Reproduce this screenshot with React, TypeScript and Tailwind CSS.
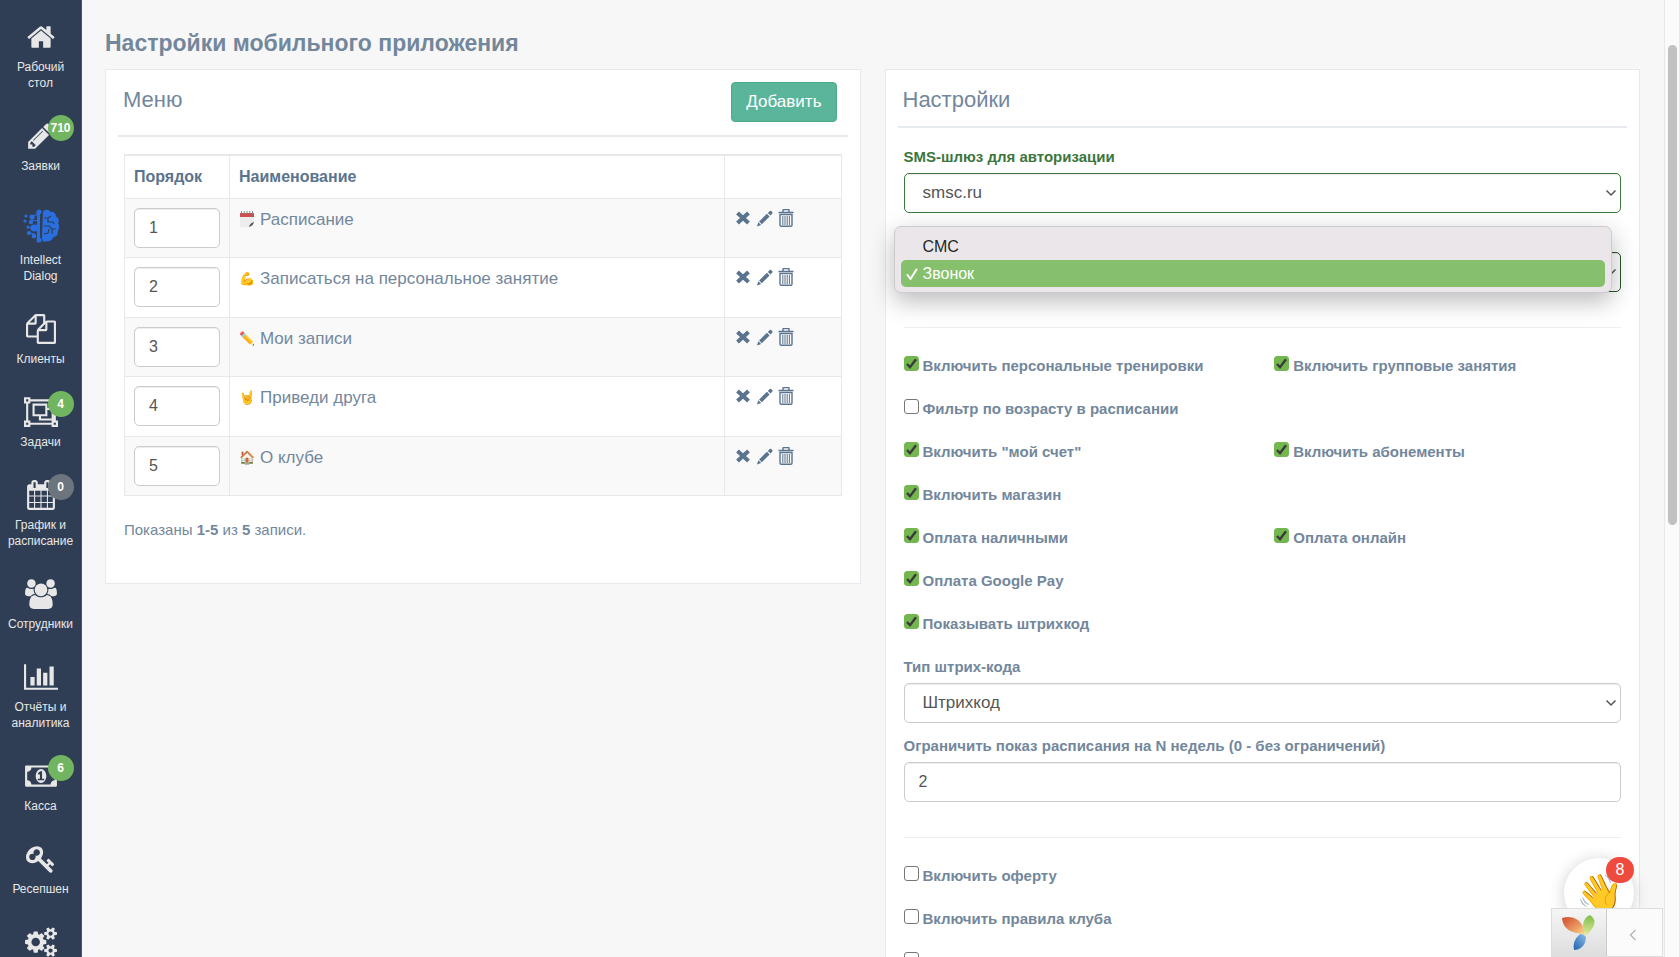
import { useState } from 'react'
import type { ReactNode } from 'react'
import clsx from 'clsx'

const iconPaths = {
  home: 'M1472 992v480q0 26-19 45t-45 19h-384v-384h-256v384h-384q-26 0-45-19t-19-45v-480q0-1 .5-3t.5-3l575-474 575 474q1 2 1 6zm223-69l-62 74q-8 9-21 11h-3q-13 0-21-7l-692-577-692 577q-12 8-24 7-13-2-21-11l-62-74q-8-10-7-23.5t11-21.5l719-599q32-26 76-26t76 26l244 204v-195q0-14 9-23t23-9h192q14 0 23 9t9 23v408l219 182q10 8 11 21.5t-7 23.5z',
  pencil: 'M491 1536l91-91-235-235-91 91v107h128v128h107zm523-928q0-22-22-22-10 0-17 7l-542 542q-7 7-7 17 0 22 22 22 10 0 17-7l542-542q7-7 7-17zm-54-192l416 416-832 832h-416v-416zm683 96q0 53-37 90l-166 166-416-416 166-165q36-38 90-38 53 0 91 38l235 234q37 39 37 91z',
  files: 'M1696 384q40 0 68 28t28 68v1216q0 40-28 68t-68 28h-960q-40 0-68-28t-28-68v-288h-544q-40 0-68-28t-28-68v-672q0-40 20-88t48-76l408-408q28-28 76-48t88-20h416q40 0 68 28t28 68v328q68-40 128-40h416zm-544 213l-299 299h299v-299zm-640-384l-299 299h299v-299zm196 647l316-316v-416h-384v416q0 40-28 68t-68 28h-416v640h512v-256q0-40 20-88t48-76zm956 804v-1152h-384v416q0 40-28 68t-68 28h-416v640h896z',
  group: 'M2048 384h-128v1024h128v384h-384v-128h-1280v128h-384v-384h128v-1024h-128v-384h384v128h1280v-128h384v384zm-256-256v128h128v-128h-128zm-1664 0v128h128v-128h-128zm128 1536v-128h-128v128h128zm1408-128v-128h128v-1024h-128v-128h-1280v128h-128v1024h128v128h1280zm256 128v-128h-128v128h128zm-512-1024h384v768h-896v-256h-384v-768h896v256zm-768 384h640v-512h-640v512zm1024 256v-512h-256v384h-384v128h640z',
  calendar: 'M192 1664h288v-288h-288v288zm352 0h320v-288h-320v288zm-352-352h288v-320h-288v320zm352 0h320v-320h-320v320zm-352-384h288v-288h-288v288zm736 736h320v-288h-320v288zm-384-736h320v-288h-320v288zm768 736h288v-288h-288v288zm-384-352h320v-320h-320v320zm-352-864v-288q0-13-9.5-22.5t-22.5-9.5h-64q-13 0-22.5 9.5t-9.5 22.5v288q0 13 9.5 22.5t22.5 9.5h64q13 0 22.5-9.5t9.5-22.5zm736 864h288v-320h-288v320zm-384-384h320v-288h-320v288zm384 0h288v-288h-288v288zm32-480v-288q0-13-9.5-22.5t-22.5-9.5h-64q-13 0-22.5 9.5t-9.5 22.5v288q0 13 9.5 22.5t22.5 9.5h64q13 0 22.5-9.5t9.5-22.5zm384-64v1280q0 52-38 90t-90 38h-1408q-52 0-90-38t-38-90v-1280q0-52 38-90t90-38h128v-96q0-66 47-113t113-47h64q66 0 113 47t47 113v96h384v-96q0-66 47-113t113-47h64q66 0 113 47t47 113v96h128q52 0 90 38t38 90z',
  users: 'M657 896q-162 5-265 128h-134q-82 0-138-40.5t-56-118.5q0-353 124-353 6 0 43.5 21t97.5 42.5 119 21.5q67 0 133-23-5 37-5 66 0 139 81 256zm1071 637q0 120-73 189.5t-194 69.5h-874q-121 0-194-69.5t-73-189.5q0-53 3.5-103.5t14-109 26.5-108.5 43-97.5 62-81 85.5-53.5 111.5-20q10 0 43 21.5t73 48 107 48 135 21.5 135-21.5 107-48 73-48 43-21.5q61 0 111.5 20t85.5 53.5 62 81 43 97.5 26.5 108.5 14 109 3.5 103.5zm-1024-1277q0 106-75 181t-181 75-181-75-75-181 75-181 181-75 181 75 75 181zm704 384q0 159-112.5 271.5t-271.5 112.5-271.5-112.5-112.5-271.5 112.5-271.5 271.5-112.5 271.5 112.5 112.5 271.5zm576 225q0 78-56 118.5t-138 40.5h-134q-103-123-265-128 81-117 81-256 0-29-5-66 66 23 133 23 59 0 119-21.5t97.5-42.5 43.5-21q124 0 124 353zm-128-609q0 106-75 181t-181 75-181-75-75-181 75-181 181-75 181 75 75 181z',
  chart: 'M640 896v512h-256v-512h256zm384-512v1024h-256v-1024h256zm1024 1152v128h-2048v-1536h128v1408h1920zm-640-896v768h-256v-768h256zm384-384v1152h-256v-1152h256z',
  money: 'M768 1152h384v-96h-128v-448h-114l-148 137 77 80q42-37 55-57h2v288h-128v96zm512-256q0 70-21 142t-59.5 134-101.5 101-138 39-138-39-101.5-101-59.5-134-21-142 21-142 59.5-134 101.5-101 138-39 138 39 101.5 101 59.5 134 21 142zm512 256v-512q-106 0-181-75t-75-181h-1152q0 106-75 181t-181 75v512q106 0 181 75t75 181h1152q0-106 75-181t181-75zm128-832v1152q0 26-19 45t-45 19h-1792q-26 0-45-19t-19-45v-1152q0-26 19-45t45-19h1792q26 0 45 19t19 45z',
  key: 'M832 512q0-80-56-136t-136-56-136 56-56 136q0 42 19 83-41-19-83-19-80 0-136 56t-56 136 56 136 136 56 136-56 56-136q0-42-19-83 41 19 83 19 80 0 136-56t56-136zm851 704q0 17-49 66t-66 49q-9 0-28.5-16t-36.5-33-38.5-40-24.5-26l-96 96 220 220q28 28 28 68 0 42-39 81t-81 39q-40 0-68-28l-671-671q-176 131-365 131-163 0-265.5-102.5t-102.5-265.5q0-160 95-313t248-248 313-95q163 0 265.5 102.5t102.5 265.5q0 189-131 365l355 355 96-96q-3-3-26-24.5t-40-38.5-33-36.5-16-28.5q0-17 49-66t66-49q13 0 23 10 6 6 46 44.5t82 79.5 86.5 86 73 78 28.500 41z',
  gears: 'M896 896q0-106-75-181t-181-75-181 75-75 181 75 181 181 75 181-75 75-181zm768 512q0-52-38-90t-90-38-90 38-38 90q0 53 37.5 90.5t90.5 37.5 90.5-37.5 37.5-90.5zm0-1024q0-52-38-90t-90-38-90 38-38 90q0 53 37.5 90.5t90.5 37.5 90.5-37.5 37.5-90.5zm-384 421v185q0 10-7 19.5t-16 10.5l-155 24q-11 35-32 76 34 48 90 115 7 11 7 20 0 12-7 19-23 30-82.5 89.5t-78.5 59.5q-11 0-21-7l-115-90q-37 19-77 31-11 108-23 155-7 24-30 24h-186q-11 0-20-7.5t-10-17.5l-23-153q-34-10-75-31l-118 89q-7 7-20 7-11 0-21-8-144-133-144-160 0-9 7-19 10-14 41-53t47-61q-23-44-35-82l-152-24q-10-1-17-9.5t-7-19.5v-185q0-10 7-19.5t16-10.5l155-24q11-35 32-76-34-48-90-115-7-11-7-20 0-12 7-20 22-30 82-89t79-59q11 0 21 7l115 90q34-18 77-32 11-108 23-154 7-24 30-24h186q11 0 20 7.5t10 17.5l23 153q34 10 75 31l118-89q8-7 20-7 11 0 21 8 144 133 144 160 0 8-7 19-12 16-42 54t-45 60q23 48 34 82l152 23q10 2 17 10.5t7 19.5zm640 533v140q0 16-149 31-12 27-30 52 51 113 51 138 0 4-4 7-122 71-124 71-8 0-46-47t-52-68q-20 2-30 2t-30-2q-14 21-52 68t-46 47q-2 0-124-71-4-3-4-7 0-25 51-138-18-25-30-52-149-15-149-31v-140q0-16 149-31 13-29 30-52-51-113-51-138 0-4 4-7 4-2 35-20t59-34 30-16q8 0 46 46.5t52 67.5q20-2 30-2t30 2q51-71 92-112l6-2q4 0 124 70 4 3 4 7 0 25-51 138 17 23 30 52 149 15 149 31zm0-1024v140q0 16-149 31-12 27-30 52 51 113 51 138 0 4-4 7-122 71-124 71-8 0-46-47t-52-68q-20 2-30 2t-30-2q-14 21-52 68t-46 47q-2 0-124-71-4-3-4-7 0-25 51-138-18-25-30-52-149-15-149-31v-140q0-16 149-31 13-29 30-52-51-113-51-138 0-4 4-7 4-2 35-20t59-34 30-16q8 0 46 46.5t52 67.5q20-2 30-2t30 2q51-71 92-112l6-2q4 0 124 70 4 3 4 7 0 25-51 138 17 23 30 52 149 15 149 31z',
}

type IconName = keyof typeof iconPaths

interface NavItem {
  label: string
  icon: IconName | 'brain'
  wide?: boolean
  badge?: number
}

const navItems: NavItem[] = [
  { label: 'Рабочий стол', icon: 'home' },
  { label: 'Заявки', icon: 'pencil', badge: 710 },
  { label: 'Intellect Dialog', icon: 'brain' },
  { label: 'Клиенты', icon: 'files' },
  { label: 'Задачи', icon: 'group', wide: true, badge: 4 },
  { label: 'График и расписание', icon: 'calendar', badge: 0 },
  { label: 'Сотрудники', icon: 'users', wide: true },
  { label: 'Отчёты и аналитика', icon: 'chart', wide: true },
  { label: 'Касса', icon: 'money', wide: true, badge: 6 },
  { label: 'Ресепшен', icon: 'key' },
  { label: 'Настройки', icon: 'gears', wide: true },
]

const menuRows = [
  { order: 1, emoji: 'calendar', name: 'Расписание' },
  { order: 2, emoji: '💪', name: 'Записаться на персональное занятие' },
  { order: 3, emoji: '✏️', name: 'Мои записи' },
  { order: 4, emoji: '🤘', name: 'Приведи друга' },
  { order: 5, emoji: '🏠', name: 'О клубе' },
]

// one entry per line, second column is optional
const optionRows = [
  ['Включить персональные тренировки', 'Включить групповые занятия'],
  ['Фильтр по возрасту в расписании'],
  ['Включить "мой счет"', 'Включить абонементы'],
  ['Включить магазин'],
  ['Оплата наличными', 'Оплата онлайн'],
  ['Оплата Google Pay'],
  ['Показывать штрихкод'],
]

const legalRows = [['Включить оферту'], ['Включить правила клуба'], ['Включить отзывы']]

const uncheckedByDefault = [
  'Фильтр по возрасту в расписании',
  'Включить оферту',
  'Включить правила клуба',
  'Включить отзывы',
]

function BrainIcon() {
  return (
    <svg viewBox="0 0 36 34" className="h-[34px] w-9" fill="#2a6fe0" stroke="#2a6fe0">
      <g strokeWidth="1.2">
        <path d="M9 8 16 4v26M16 12l-8-1M12 19H6M12 19l4 6M12 19l4-6M11 25l-4-1" fill="none" />
        <path d="M14 3v28l3 1V2z" stroke="none" />
        <circle cx="16" cy="3" r="2" />
        <circle cx="16" cy="31" r="2" />
        <circle cx="9" cy="8" r="2" />
        <circle cx="3" cy="7" r="1" />
        <circle cx="2" cy="12" r="1" />
        <circle cx="8" cy="13" r="1.6" />
        <circle cx="11" cy="19" r="3" />
        <circle cx="5" cy="18" r="1" />
        <circle cx="6" cy="24" r="1.4" />
        <circle cx="11" cy="27" r="1.8" />
      </g>
      <path
        d="M21 3q4-3 6 1 5-1 5 4 4 2 2 6 2 4 0 8 0 5-4 5-2 5-6 4-4 2-4-2z"
        strokeWidth="2"
        strokeLinejoin="round"
      />
      <path
        d="M21 9h4l3-2M25 9v4h5l1 2M21 17h5l3 3h4M26 20l-1 4-4 1M29 20v5"
        fill="none"
        stroke="#2f3e54"
        strokeWidth="1.2"
      />
    </svg>
  )
}

function NavIcon({ name, wide }: { name: NavItem['icon']; wide?: boolean }) {
  if (name === 'brain') return <BrainIcon />
  let viewBox = '0 0 1792 1792'
  if (wide) viewBox = name === 'money' || name === 'gears' ? '-64 0 2048 1792' : '0 0 2048 1792'
  return (
    <svg viewBox={viewBox} className={wide ? 'h-[30px] w-[34px]' : 'h-[30px] w-[30px]'} fill="#e7e7e7">
      <path d={iconPaths[name]} />
    </svg>
  )
}

function Sidebar() {
  return (
    <nav className="w-[82px] shrink-0 border-r border-[#49566a] bg-[#2f3e54] pt-[22px]">
      {navItems.map(item => (
        <a key={item.label} href="#" className="flex flex-col items-center px-1 pb-[30px] text-center text-xs leading-4 text-[#e7e7e7]">
          <span className={clsx('relative flex items-center justify-center', item.icon === 'brain' ? 'h-12 pb-[5px]' : 'h-[37px] pb-[7px]')}>
            <NavIcon name={item.icon} wide={item.wide} />
            {item.badge !== undefined && (
              <span
                className={clsx(
                  'absolute -top-[6px] left-1/2 ml-[7px] flex h-[26px] w-[26px] items-center justify-center rounded-full text-xs font-bold text-white',
                  item.badge > 0 ? 'bg-[#72b560]' : 'bg-[#6c757d]'
                )}
              >
                {item.badge}
              </span>
            )}
          </span>
          {item.label}
        </a>
      ))}
    </nav>
  )
}

function SpiralCalendar() {
  return (
    <svg viewBox="0 0 16 17" className="h-[17px] w-4">
      <path d="M1 3h14v8l-5 5H1z" fill="#ececec" />
      <path d="M1 2h14v4H1z" fill="#c9504e" />
      <path d="M2.500 0v3M5.200 0v3M8 0v3M10.800 0v3M13.500 0v3" stroke="#8a8a8a" />
      <path d="M15 11q-1 4-5 5 1-4 5-5z" fill="#4f4f4f" />
    </svg>
  )
}

function RowActions() {
  return (
    <div className="flex gap-[5px] text-[#5a738e]">
      <button aria-label="Отключить">
        <svg viewBox="0 0 16 18" className="h-[18px] w-4" fill="none" stroke="currentColor" strokeWidth="4">
          <path d="m2.500 4 11 10M13.500 4l-11 10" />
        </svg>
      </button>
      <button aria-label="Изменить">
        <svg viewBox="0 0 18 18" className="h-[18px] w-[17px]" fill="currentColor">
          <path d="m1 18 1.500-4.500 3 3zM3.300 12.600 11.600 4.500l2.800 2.800-8.200 8.200zM12.500 3.600 14.600 1.500q.8-.6 1.500 0l1.200 1.300q.7.700 0 1.500L15.400 6.400z" />
        </svg>
      </button>
      <button aria-label="Удалить">
        <svg viewBox="0 0 16 18" className="h-[18px] w-4" fill="none" stroke="currentColor">
          <path d="M.5 3.500h15M5 3V1q0-.5.500-.5h5q.5 0 .5.500v2" strokeWidth="1.400" />
          <path d="M2 5.500h12V16q0 1.300-1.300 1.300H3.300Q2 17.300 2 16z" strokeWidth="1.400" />
          <path d="M4.800 7v9M7 7v9M9.200 7v9M11.400 7v9" />
        </svg>
      </button>
    </div>
  )
}

function Panel({ title, action, children }: { title: string; action?: ReactNode; children: ReactNode }) {
  return (
    <section className="border border-[#e6e9ed] bg-white px-3 pt-3">
      <div className={clsx('flex items-start justify-between border-b-2 border-[#e6e9ed] pl-[5px] pr-[11px]', action ? 'pb-[13px]' : 'pb-2')}>
        <h2 className="text-[22px] leading-9">{title}</h2>
        {action}
      </div>
      <div className={clsx('px-[6px]', action ? 'pt-[17px]' : 'pt-[18px]')}>{children}</div>
    </section>
  )
}

function MenuPanel() {
  return (
    <Panel
      title="Меню"
      action={
        <button className="h-10 rounded-[4px] border border-[#4ea88a] bg-[#5bb59a] px-[14px] text-[17px] text-white">Добавить</button>
      }
    >
      <table className="h-[342px] w-full border-collapse border border-t-2 border-[#e8e8e8] text-[17px]">
        <thead>
          <tr className="h-[43px] text-left text-base text-[#5a738e]">
            <th className="w-[105px] border border-[#e8e8e8] px-[9px]">Порядок</th>
            <th className="border border-[#e8e8e8] px-[9px]">Наименование</th>
            <th className="w-[117px] border border-[#e8e8e8]" />
          </tr>
        </thead>
        <tbody>
          {menuRows.map(row => (
            <tr key={row.order} className="align-top odd:bg-[#f9f9f9]">
              <td className="border border-[#e8e8e8] px-[9px] pt-[9px] pb-2">
                <input
                  aria-label={`Порядок: ${row.name}`}
                  defaultValue={row.order}
                  className="block h-10 w-full rounded-[5px] border border-[#ccc] bg-white px-[14px] text-base text-[#555] shadow-[inset_0_1px_1px_rgba(0,0,0,0.075)]"
                />
              </td>
              <td className="border border-[#e8e8e8] px-[9px] pt-[9px] leading-6">
                <div className="flex items-center">
                  <span className="w-[21px] text-[13px]">{row.emoji === 'calendar' ? <SpiralCalendar /> : row.emoji}</span>
                  {row.name}
                </div>
              </td>
              <td className="border border-[#e8e8e8] px-[10px] pt-[10px]">
                <RowActions />
              </td>
            </tr>
          ))}
        </tbody>
      </table>
      <p className="pt-6 pb-[43px] text-[15px] leading-5">
        Показаны <b>1-5</b> из <b>5</b> записи.
      </p>
    </Panel>
  )
}

function Field({ id, label, valid, children }: { id: string; label: string; valid?: boolean; children: ReactNode }) {
  return (
    <div className={clsx('relative mb-3', valid && 'text-[#3c763d]')}>
      <label htmlFor={id} className="mb-[5px] block text-[15px] leading-[22px] font-bold">
        {label}
      </label>
      {children}
    </div>
  )
}

function SelectBox({ id, value, border }: { id: string; value: string; border: string }) {
  return (
    <div className="relative">
      <select id={id} className={clsx('block h-10 w-full appearance-none rounded-[5px] border bg-white px-[18px] text-[17px] text-[#555] shadow-[inset_0_1px_1px_rgba(0,0,0,0.075)]', border)}>
        <option>{value}</option>
      </select>
      <svg viewBox="0 0 12 8" className="pointer-events-none absolute top-4 right-1 h-2 w-3" fill="none" stroke="#555" strokeWidth="1.5">
        <path d="m1.500 1.500 4.500 4.500 4.500-4.500" />
      </svg>
    </div>
  )
}

function AuthTypePopup() {
  return (
    <ul
      role="listbox"
      aria-label="Тип авторизации"
      className="absolute top-px right-[9px] -left-[10px] rounded-[7px] border border-[#cfcacd] bg-[#ebe6ea] px-[6px] pt-[6px] pb-[5px] text-base leading-[27px] shadow-[0_8px_24px_rgba(0,0,0,0.28)]"
    >
      <li role="option" aria-selected="false" className="pl-[22px] text-[#262626]">
        СМС
      </li>
      <li role="option" aria-selected="true" className="flex items-center rounded-[5px] bg-[#87c06c] pl-[5px] text-white">
        <svg viewBox="0 0 12 12" className="mr-[5px] h-3 w-3" fill="none" stroke="currentColor" strokeWidth="2" strokeLinecap="round" strokeLinejoin="round">
          <path d="m1.500 7 3 4 6-9.500" />
        </svg>
        Звонок
      </li>
    </ul>
  )
}

function CheckOption({ label }: { label: string }) {
  const [checked, setChecked] = useState(!uncheckedByDefault.includes(label))
  return (
    <label className="flex h-[43px] items-center text-[15px] font-bold">
      <span className="relative mr-1 mb-[6px] block h-[15px] w-[15px]">
        <input
          type="checkbox"
          checked={checked}
          onChange={e => setChecked(e.target.checked)}
          className="block h-[15px] w-[15px] appearance-none rounded-[3px] border border-[#767676] bg-white checked:border-[#74b751] checked:bg-[#74b751]"
        />
        {checked && (
          <svg viewBox="0 0 15 15" className="pointer-events-none absolute inset-0" fill="none" stroke="#3a3a3a" strokeWidth="2.400">
            <path d="m3 8 3 3.200 6-8" />
          </svg>
        )}
      </span>
      {label}
    </label>
  )
}

function OptionGrid({ rows }: { rows: string[][] }) {
  return (
    <div className="pt-[17px]">
      {rows.map(row => (
        <div key={row[0]} className="grid grid-cols-2 gap-x-6">
          {row.map(label => (
            <CheckOption key={label} label={label} />
          ))}
        </div>
      ))}
    </div>
  )
}

function SettingsPanel() {
  return (
    <Panel title="Настройки">
      <Field id="gateway" label="SMS-шлюз для авторизации" valid>
        <SelectBox id="gateway" value="smsc.ru" border="border-[#3c763d]" />
      </Field>
      <Field id="auth-type" label="Тип авторизации" valid>
        <SelectBox id="auth-type" value="Звонок" border="border-[#2b542c]" />
        <AuthTypePopup />
      </Field>
      <hr className="mt-[35px] border-[#eee]" />
      <OptionGrid rows={optionRows} />
      <div className="pt-[10px]">
        <Field id="barcode" label="Тип штрих-кода">
          <SelectBox id="barcode" value="Штрихкод" border="border-[#ccc]" />
        </Field>
        <Field id="weeks" label="Ограничить показ расписания на N недель (0 - без ограничений)">
          <input id="weeks" defaultValue="2" className="block h-10 w-full rounded-[5px] border border-[#ccc] px-[14px] text-base text-[#555] shadow-[inset_0_1px_1px_rgba(0,0,0,0.075)]" />
        </Field>
      </div>
      <hr className="mt-[35px] border-[#eee]" />
      <OptionGrid rows={legalRows} />
    </Panel>
  )
}

function ChatButton() {
  return (
    <button aria-label="Чат" className="absolute right-[46px] bottom-[29px] flex h-[70px] w-[70px] items-center justify-center rounded-full bg-white text-[38px] shadow-[0_2px_16px_rgba(0,0,0,0.2)]">
      👋
      <span className="absolute -top-px right-0 flex h-[26px] w-7 items-center justify-center rounded-full bg-[#ee4b3e] text-base text-white">8</span>
    </button>
  )
}

function DebugToolbar() {
  return (
    <div className="absolute right-[17px] bottom-0 flex h-[49px] w-28 border border-[#ddd] bg-[#fbfbfb]">
      <a href="#" aria-label="Yii" className="flex w-[55px] items-center justify-center border-r border-[#ccc] bg-gradient-to-b from-[#f5f5f5] to-[#dedede]">
        <svg viewBox="0 0 34 36" className="h-9 w-[34px]">
          <defs>
            <linearGradient id="orange" x1="0" y1="0" x2="1" y2="1">
              <stop offset="0" stopColor="#cf4a2c" />
              <stop offset=".6" stopColor="#eb9a63" />
              <stop offset="1" stopColor="#fbe08a" />
            </linearGradient>
            <linearGradient id="green" x1="0" y1="0" x2="0" y2="1">
              <stop offset="0" stopColor="#7dbd4b" />
              <stop offset="1" stopColor="#e3ec9a" />
            </linearGradient>
            <linearGradient id="blue" x1="1" y1="0" x2="0" y2="1">
              <stop offset="0" stopColor="#8fbfe8" />
              <stop offset="1" stopColor="#1f62ae" />
            </linearGradient>
          </defs>
          <path d="M0 3Q9 0 16 5q6 5 7 15-4-2-9-2Q1 15 0 3z" fill="url(#orange)" />
          <path d="M28 0q6 4 4 10-2 5-8 11-2-5-3-10 0-8 7-11z" fill="url(#green)" />
          <path d="M18 19q4 0 6 3 0 6-4 10-3 3-8 3-2-9 6-16z" fill="url(#blue)" />
        </svg>
      </a>
      <button aria-label="Развернуть" className="flex flex-1 items-center justify-center pt-1 pr-1">
        <svg viewBox="0 0 8 14" className="h-3 w-2" fill="none" stroke="#aaa" strokeWidth="1.300">
          <path d="M7 1 1 7l6 6" />
        </svg>
      </button>
    </div>
  )
}

export default function App() {
  return (
    <div className="relative flex h-screen overflow-hidden bg-[#f7f7f7] font-['Liberation_Sans',Arial,sans-serif] text-[#73879c]">
      <Sidebar />
      <main className="min-w-0 flex-1 pt-[26px] pr-6 pl-[23px]">
        <h1 className="mb-[9px] text-[23px] leading-[34px] font-bold">Настройки мобильного приложения</h1>
        <div className="grid grid-cols-2 items-start gap-6">
          <MenuPanel />
          <SettingsPanel />
        </div>
      </main>
      <div className="w-4 shrink-0 border-x border-[#e8e8e8] bg-[#fafafa] pt-[45px]">
        <div className="mx-auto h-[480px] w-[9px] rounded-full bg-[#c1c1c1]" />
      </div>
      <ChatButton />
      <DebugToolbar />
    </div>
  )
}
